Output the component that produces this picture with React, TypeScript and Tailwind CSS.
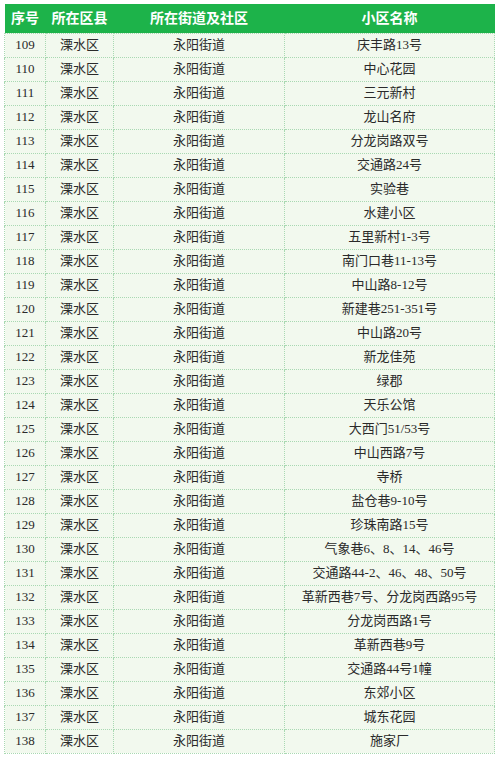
import React from "react"

const names = [
  "庆丰路13号",
  "中心花园",
  "三元新村",
  "龙山名府",
  "分龙岗路双号",
  "交通路24号",
  "实验巷",
  "水建小区",
  "五里新村1-3号",
  "南门口巷11-13号",
  "中山路8-12号",
  "新建巷251-351号",
  "中山路20号",
  "新龙佳苑",
  "绿郡",
  "天乐公馆",
  "大西门51/53号",
  "中山西路7号",
  "寺桥",
  "盐仓巷9-10号",
  "珍珠南路15号",
  "气象巷6、8、14、46号",
  "交通路44-2、46、48、50号",
  "革新西巷7号、分龙岗西路95号",
  "分龙岗西路1号",
  "革新西巷9号",
  "交通路44号1幢",
  "东郊小区",
  "城东花园",
  "施家厂",
]

const rows = names.map((name, i) => ({
  no: 109 + i,
  county: "溧水区",
  street: "永阳街道",
  name,
}))

export default function App() {
  return (
    <div
      className="w-[500px] h-[760px] bg-white pt-[4px] pl-[4px]"
      style={{ fontFamily: '"Liberation Serif", "Noto Sans CJK SC", serif' }}
    >
      <table className="w-[490px] border-collapse table-fixed text-[13px] text-[#2a2a2a]">
        <colgroup>
          <col className="w-[41px]" />
          <col className="w-[68px]" />
          <col className="w-[171px]" />
          <col className="w-[210px]" />
        </colgroup>
        <thead>
          <tr className="h-[29px] bg-[#1db34a] text-white text-[14px]">
            <th className="font-bold">序号</th>
            <th className="font-bold">所在区县</th>
            <th className="font-bold">所在街道及社区</th>
            <th className="font-bold">小区名称</th>
          </tr>
        </thead>
        <tbody>
          {rows.map((r) => (
            <tr key={r.no} className="h-[24px] bg-[#f2f9ee]">
              <td className="border border-dotted border-[#a9d9b2] text-center p-0">{r.no}</td>
              <td className="border border-dotted border-[#a9d9b2] text-center p-0">{r.county}</td>
              <td className="border border-dotted border-[#a9d9b2] text-center p-0">{r.street}</td>
              <td className="border border-dotted border-[#a9d9b2] text-center p-0 whitespace-nowrap">{r.name}</td>
            </tr>
          ))}
        </tbody>
      </table>
    </div>
  )
}
